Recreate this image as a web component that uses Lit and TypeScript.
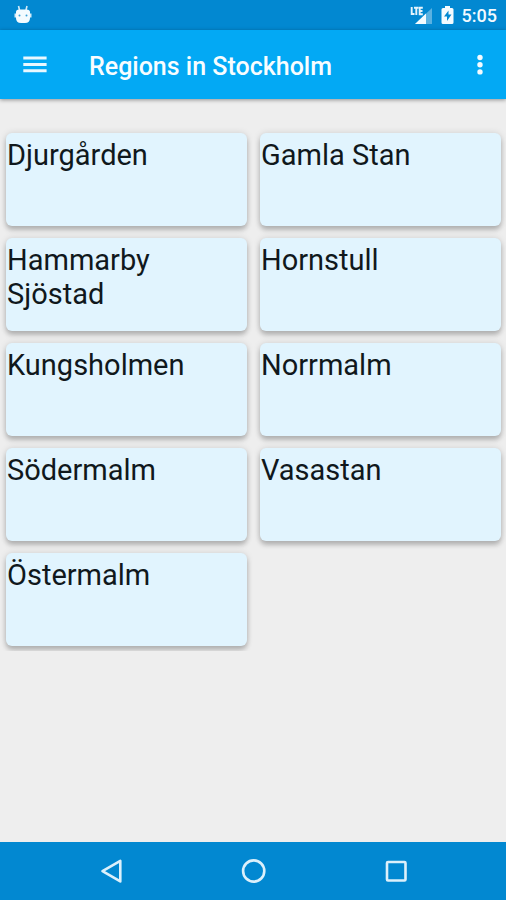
import { LitElement, html, css } from "lit";
import { customElement, property } from "lit/decorators.js";

@customElement("status-bar")
class StatusBar extends LitElement {
  static styles = css`
    :host {
      display: flex;
      align-items: center;
      justify-content: space-between;
      height: 30px;
      padding: 0 9px 0 13px;
      background: #0288d1;
      color: #f2faff;
    }
    svg {
      display: block;
    }
    .system {
      display: flex;
      align-items: center;
      gap: 8px;
    }
    .clock {
      font-size: 18px;
      line-height: 30px;
      font-weight: 500;
      padding-top: 2px;
    }
  `;
  render() {
    return html`
      <svg width="20" height="20" viewBox="0 0 20 20" aria-hidden="true">
        <path d="M5.500 1l1 4M14 1l-1 4" stroke="#d3ebf8" stroke-width="1.600" fill="none" />
        <path d="M3 7Q3 4.500 6 4.500h7.500Q17 4.500 17 7v6Q17 18 12 18H8Q3 18 3 13z" fill="#f4fbff" />
        <path d="M2.300 8.500v4M17.700 8.500v4" stroke="#d3ebf8" stroke-width="1.600" />
        <circle cx="6.500" cy="10.500" r="1" fill="#3a9fd8" />
        <circle cx="13.500" cy="10.500" r="1" fill="#3a9fd8" />
      </svg>
      <div class="system">
        <svg width="23" height="20" viewBox="0 0 23 20" aria-label="LTE signal" role="img">
          <path d="M22 3v16H5z" fill="#fff" fill-opacity="0.350" />
          <path d="M16 8.500v10.500H5z" fill="#f4fbff" />
          <path
            d="M1.700 2v7h2.800M4 2.800h4.500M6.300 3v7M12.800 2.800H9.700v6.400h3.100M9.700 6h2.800"
            stroke="#e6f4fc"
            stroke-width="1.900"
            fill="none"
          />
        </svg>
        <svg width="13" height="20" viewBox="0 0 13 20" aria-label="Battery charging" role="img">
          <path d="M4 1h5v2h2q1.500 0 1.500 1.500v13Q12.500 19 11 19H2Q.5 19 .5 17.500v-13Q.5 3 2 3h2z" fill="#f4fbff" />
          <path d="M7.500 5.500L3 11.500h3v4.500l4.500-6.500h-3z" fill="#0288d1" />
        </svg>
        <span class="clock">5:05</span>
      </div>
    `;
  }
}

@customElement("tool-bar")
class ToolBar extends LitElement {
  @property() heading = "";
  static styles = css`
    :host {
      display: flex;
      align-items: center;
      height: 69px;
      padding: 0 5px 0 14px;
      background: #03a9f4;
      box-shadow: 0 1px 4px rgba(0, 0, 0, 0.4);
      color: #f8fdff;
    }
    button {
      display: grid;
      place-items: center;
      width: 42px;
      height: 42px;
      padding: 0;
      border: 0;
      background: none;
      color: inherit;
      cursor: pointer;
    }
    svg {
      display: block;
    }
    h1 {
      flex: 1;
      margin: 0 0 0 33px;
      font-size: 25px;
      line-height: 32px;
      font-weight: 500;
      padding-top: 4px;
    }
  `;
  render() {
    return html`
      <button aria-label="Open menu">
        <svg width="24" height="18" viewBox="0 0 24 18" fill="#e9f8ff">
          <path d="M0.300 0.500h23.300v3H0.300zM0.300 6.900h23.300v3H0.300zM0.300 13.300h23.300v3H0.300z" />
        </svg>
      </button>
      <h1>${this.heading}</h1>
      <button aria-label="More options">
        <svg width="6" height="22" viewBox="0 0 6 22" fill="#f4fbff">
          <circle cx="3" cy="3.500" r="2.700" />
          <circle cx="3" cy="10.700" r="2.700" />
          <circle cx="3" cy="17.900" r="2.700" />
        </svg>
      </button>
    `;
  }
}

@customElement("region-grid")
class RegionGrid extends LitElement {
  @property({ attribute: false }) regions: string[] = [];
  static styles = css`
    :host {
      display: block;
      padding-top: 20px;
    }
    ul {
      display: grid;
      grid-template-columns: 1fr 1fr;
      grid-auto-rows: minmax(93px, auto);
      gap: 12px 13px;
      margin: 0;
      padding: 14px 5px 5px 6px;
      list-style: none;
      overflow: hidden;
    }
    li {
      display: grid;
    }
    button {
      display: flex;
      align-items: flex-start;
      padding: 5px 0 0 1px;
      border: 0;
      border-radius: 6px;
      background: #e1f4fe;
      box-shadow: 0 4px 5px rgba(0, 0, 0, 0.22), 0 0 7px rgba(0, 0, 0, 0.12);
      color: #10181c;
      font: inherit;
      font-size: 29px;
      line-height: 34px;
      text-align: left;
      cursor: pointer;
    }
  `;
  render() {
    return html`<ul>
      ${this.regions.map((name) => html`<li><button>${name}</button></li>`)}
    </ul>`;
  }
}

@customElement("nav-bar")
class NavBar extends LitElement {
  static styles = css`
    :host {
      display: flex;
      justify-content: center;
      align-items: center;
      gap: 94px;
      height: 58px;
      background: #0288d1;
    }
    button {
      display: grid;
      place-items: center;
      width: 48px;
      height: 48px;
      padding: 0;
      border: 0;
      background: none;
      cursor: pointer;
    }
    svg {
      display: block;
      fill: none;
      stroke: #dcf0fb;
      stroke-width: 2.6;
      stroke-linejoin: round;
    }
  `;
  render() {
    return html`
      <button aria-label="Back">
        <svg width="26" height="26" viewBox="0 0 26 26"><path d="M22.300 2.800v20.600L4.500 13.100z" /></svg>
      </button>
      <button aria-label="Home">
        <svg width="26" height="26" viewBox="0 0 26 26"><circle cx="13.700" cy="13" r="10.600" /></svg>
      </button>
      <button aria-label="Recent apps">
        <svg width="26" height="26" viewBox="0 0 26 26"><rect x="5" y="4" width="18.500" height="18.500" rx="1" /></svg>
      </button>
    `;
  }
}

@customElement("app-root")
class AppRoot extends LitElement {
  static styles = css`
    :host {
      display: flex;
      flex-direction: column;
      min-height: 100vh;
      background: #eeeeee;
      font-family: Roboto, "Noto Sans", sans-serif;
    }
    main {
      flex: 1;
    }
  `;
  private regions = [
    "Djurgården",
    "Gamla Stan",
    "Hammarby Sjöstad",
    "Hornstull",
    "Kungsholmen",
    "Norrmalm",
    "Södermalm",
    "Vasastan",
    "Östermalm",
  ];
  render() {
    return html`
      <status-bar></status-bar>
      <tool-bar heading="Regions in Stockholm"></tool-bar>
      <main><region-grid .regions=${this.regions}></region-grid></main>
      <nav-bar></nav-bar>
    `;
  }
}
